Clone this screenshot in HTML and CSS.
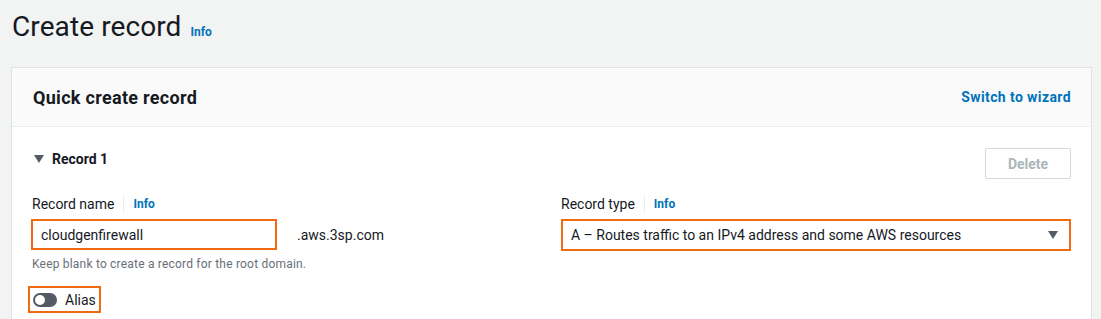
FILE: index.html
```html
<!DOCTYPE html>
<html>
  <head>
    <title>Create record</title>
    <link rel="stylesheet" href="styles.css">
  </head>
  <body>
    <div class="page-title">
      <h1>Create record</h1>
      <a class="info-link" href="#">Info</a>
    </div>

    <div class="card">
      <div class="card-header">
        <h2>Quick create record</h2>
        <a class="header-link" href="#">Switch to wizard</a>
      </div>

      <div class="card-body">
        <div class="record-head">
          <div class="record-title">
            <span class="caret"></span>
            <span>Record 1</span>
          </div>
          <button class="btn-delete" disabled>Delete</button>
        </div>

        <div class="fields">
          <div class="field">
            <div class="field-label">
              <span>Record name</span>
              <a class="info-link small" href="#">Info</a>
            </div>
            <div class="name-row">
              <div class="text-input highlight">cloudgenfirewall</div>
              <span class="domain">.aws.3sp.com</span>
            </div>
            <div class="hint">Keep blank to create a record for the root domain.</div>
            <div class="alias highlight">
              <span class="toggle"><span class="knob"></span></span>
              <span>Alias</span>
            </div>
          </div>

          <div class="field">
            <div class="field-label">
              <span>Record type</span>
              <a class="info-link small" href="#">Info</a>
            </div>
            <div class="select highlight">
              <span>A – Routes traffic to an IPv4 address and some AWS resources</span>
              <span class="select-arrow"></span>
            </div>
          </div>
        </div>
      </div>
    </div>
  </body>
</html>
```

FILE: styles.css
```css
body {
  margin: 0;
  background-color: #f2f3f3;
  font-family: Roboto, "Liberation Sans", Arial, sans-serif;
  color: #16191f;
}

a {
  text-decoration: none;
}

.page-title {
  display: flex;
  align-items: baseline;
  padding: 8px 12px 0 12px;
  height: 58px;
  box-sizing: border-box;
}

.page-title h1 {
  margin: 0;
  font-size: 28px;
  font-weight: 400;
  line-height: 38px;
  letter-spacing: 0.1px;
}

.info-link {
  color: #0073bb;
  font-weight: 700;
  font-size: 12px;
  margin-left: 9px;
}

.card {
  margin: 9px 9px 0 11px;
  border: 1px solid #dfe3e3;
  border-bottom: none;
  background-color: #ffffff;
  height: 260px;
}

.card-header {
  display: flex;
  align-items: center;
  justify-content: space-between;
  background-color: #fafafa;
  border-bottom: 1px solid #eaeded;
  height: 58px;
  padding: 0 20px 0 21px;
}

.card-header h2 {
  margin: 0;
  font-size: 18px;
  font-weight: 700;
  letter-spacing: 0.3px;
}

.header-link {
  color: #0073bb;
  font-weight: 700;
  font-size: 14px;
  letter-spacing: 0.4px;
}

.card-body {
  padding: 21px 20px 0 21px;
}

.record-head {
  display: flex;
  justify-content: space-between;
  align-items: flex-start;
}

.record-title {
  display: flex;
  align-items: center;
  gap: 8px;
  margin-top: 3px;
  font-size: 14px;
  font-weight: 700;
}

.caret {
  width: 0;
  height: 0;
  border-left: 5px solid transparent;
  border-right: 5px solid transparent;
  border-top: 8px solid #545b64;
  margin-left: 1px;
}

.btn-delete {
  width: 86px;
  height: 31px;
  background-color: #ffffff;
  border: 1px solid #d5dbdb;
  border-radius: 2px;
  color: #aab7b8;
  font-family: inherit;
  font-size: 14px;
  font-weight: 700;
}

.fields {
  display: grid;
  grid-template-columns: 1fr 1fr;
  gap: 20px;
  margin-top: 14px;
}

.field-label {
  display: flex;
  align-items: center;
  font-size: 14px;
  color: #16191f;
  height: 22px;
  margin-left: -1px;
}

.info-link.small {
  margin-left: 9px;
  padding-left: 9px;
  border-left: 1px solid #eaeded;
  line-height: 18px;
}

.highlight {
  border: 2px solid #f06a10;
}

.name-row {
  display: flex;
  align-items: center;
  margin-top: 4px;
  margin-left: -2px;
}

.text-input {
  width: 234px;
  height: 27px;
  display: flex;
  align-items: center;
  padding-left: 8px;
  font-size: 14px;
}

.domain {
  margin-left: 20px;
  font-size: 14px;
  color: #16191f;
}

.hint {
  font-size: 12px;
  line-height: 14px;
  letter-spacing: 0.2px;
  color: #687078;
  margin-top: 7px;
  margin-left: -1px;
}

.alias {
  display: inline-flex;
  align-items: center;
  gap: 8px;
  margin-top: 15px;
  margin-left: -5px;
  padding: 0 3px 0 3px;
  height: 23px;
  font-size: 14px;
}

.toggle {
  position: relative;
  display: inline-block;
  width: 24px;
  height: 14px;
  border-radius: 7px;
  background-color: #545b64;
}

.knob {
  position: absolute;
  left: 2px;
  top: 2px;
  width: 10px;
  height: 10px;
  border-radius: 50%;
  background-color: #ffffff;
}

.select {
  display: flex;
  align-items: center;
  justify-content: space-between;
  height: 28px;
  margin-top: 4px;
  margin-left: -1px;
  padding: 0 11px 0 8px;
  font-size: 14px;
}

.select-arrow {
  width: 0;
  height: 0;
  border-left: 5px solid transparent;
  border-right: 5px solid transparent;
  border-top: 8px solid #545b64;
}
```
